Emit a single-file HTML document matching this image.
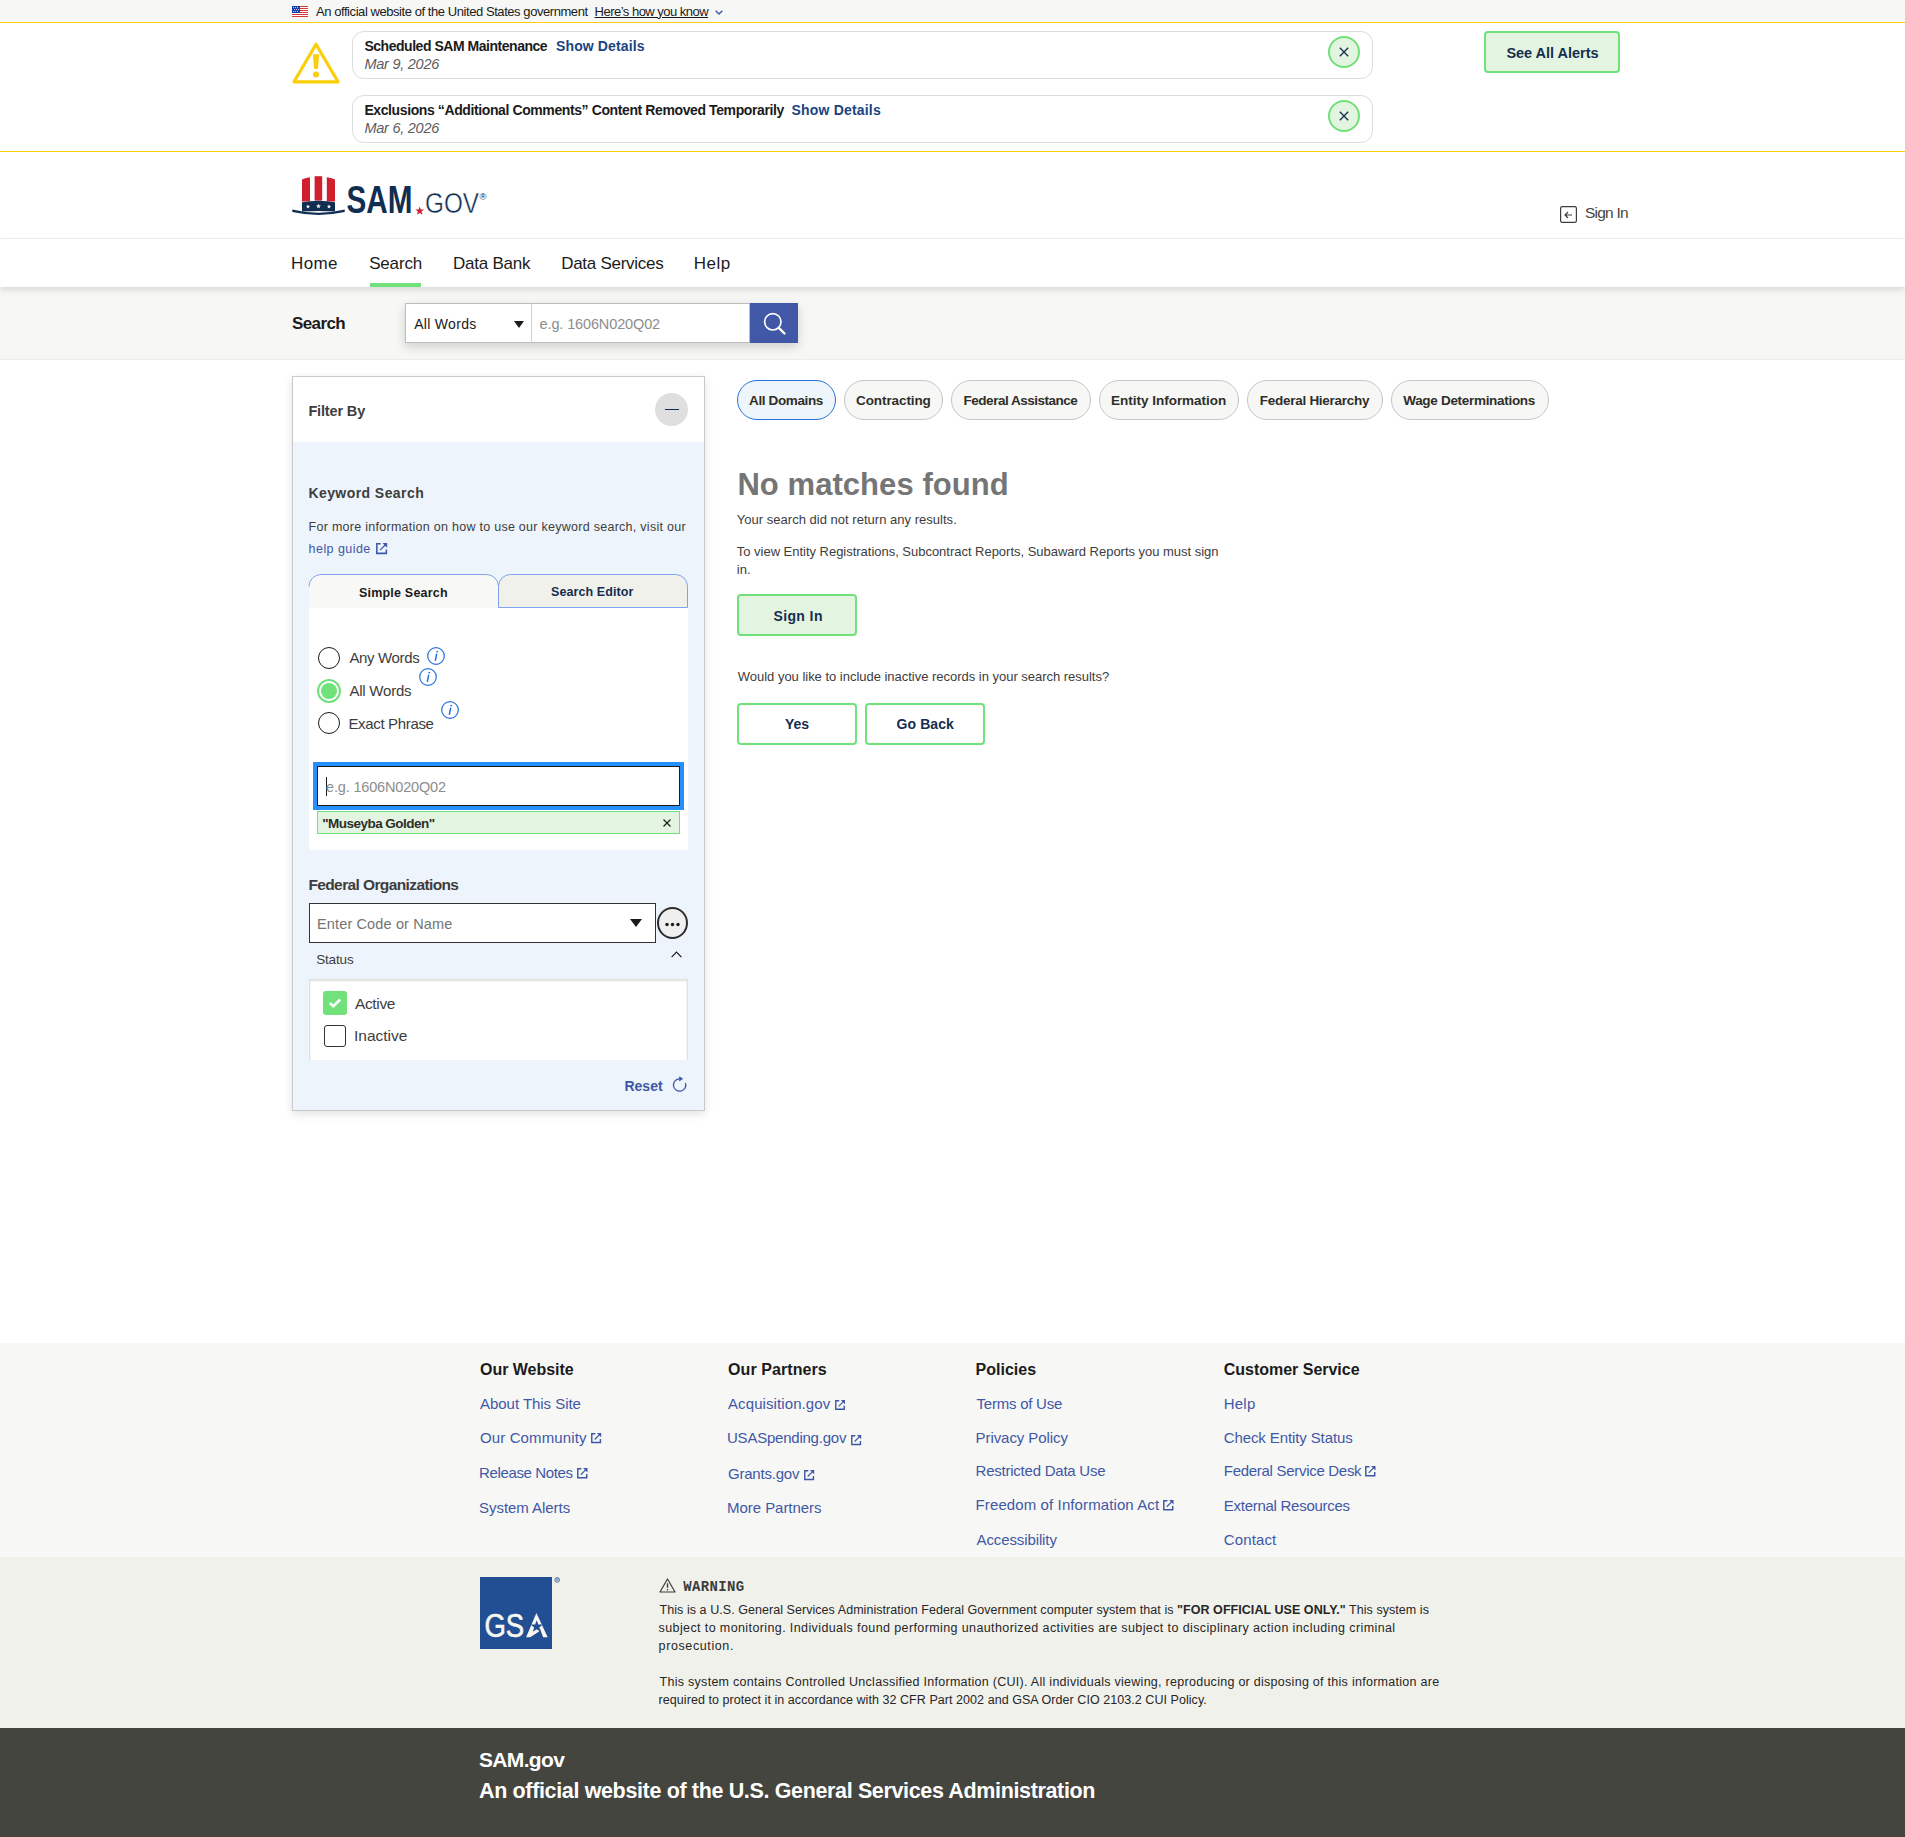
<!DOCTYPE html>
<html lang="en"><head><meta charset="utf-8"><title>SAM.gov Search</title>
<style>
html,body{margin:0;padding:0;}
body{width:1905px;height:1837px;position:relative;overflow:hidden;background:#fff;font-family:"Liberation Sans", sans-serif;}
.t{position:absolute;z-index:5;white-space:nowrap;line-height:normal;}
.b{position:absolute;box-sizing:border-box;}
svg{position:absolute;overflow:visible;}
</style></head>
<body>
<!-- gov banner -->
<div class="b" style="left:0;top:0;width:1905px;height:22px;background:#f7f7f5;"></div>
<div class="b" style="left:0;top:22px;width:1905px;height:1px;background:#fcce0a;"></div>
<svg style="left:292px;top:6px" width="16" height="11" viewBox="0 0 16 11">
 <rect width="16" height="11" fill="#fff"/>
 <g fill="#d83933"><rect y="0" width="16" height="1"/><rect y="2" width="16" height="1"/><rect y="4" width="16" height="1"/><rect y="6" width="16" height="1"/><rect y="8" width="16" height="1"/><rect y="10" width="16" height="1"/></g>
 <rect width="8" height="7" fill="#1a3ead"/>
 <g fill="#fff"><circle cx="1.6" cy="1.4" r=".5"/><circle cx="3.6" cy="1.4" r=".5"/><circle cx="5.6" cy="1.4" r=".5"/><circle cx="2.6" cy="3.4" r=".5"/><circle cx="4.6" cy="3.4" r=".5"/><circle cx="6.4" cy="3.4" r=".5"/><circle cx="1.6" cy="5.4" r=".5"/><circle cx="3.6" cy="5.4" r=".5"/><circle cx="5.6" cy="5.4" r=".5"/></g>
</svg>
<svg style="left:715px;top:10px" width="8" height="5" viewBox="0 0 8 5"><path d="M.7.7 4 4 7.3.7" fill="none" stroke="#3f57a6" stroke-width="1.4"/></svg>
<!-- alerts -->
<div class="b" style="left:0;top:151px;width:1905px;height:1px;background:#fcce0a;"></div>
<svg style="left:292px;top:42px" width="48" height="42" viewBox="0 0 48 42">
 <path d="M24 2.2 L46 39.8 H2 Z" fill="none" stroke="#fcce0a" stroke-width="3.2" stroke-linejoin="round"/>
 <path d="M20.9 12.6 Q24 11.2 27.1 12.6 L26 26.6 Q24 27.6 22 26.6 Z" fill="#fcce0a"/>
 <circle cx="24" cy="32.6" r="3" fill="#fcce0a"/>
</svg>
<div class="b" style="left:352px;top:31px;width:1021px;height:48px;border:1px solid #dcdcdc;border-radius:12px;"></div>
<div class="b" style="left:352px;top:95px;width:1021px;height:48px;border:1px solid #dcdcdc;border-radius:12px;"></div>
<div class="b" style="left:1328px;top:36px;width:32px;height:32px;border:2px solid #70e17b;border-radius:50%;background:#e3f5e1;"></div>
<div class="b" style="left:1328px;top:100px;width:32px;height:32px;border:2px solid #70e17b;border-radius:50%;background:#e3f5e1;"></div>
<svg style="left:1339px;top:47px" width="10" height="10" viewBox="0 0 10 10"><path d="M.8.8 9.2 9.2M9.2.8.8 9.2" stroke="#162e51" stroke-width="1.3"/></svg>
<svg style="left:1339px;top:111px" width="10" height="10" viewBox="0 0 10 10"><path d="M.8.8 9.2 9.2M9.2.8.8 9.2" stroke="#162e51" stroke-width="1.3"/></svg>
<div class="b" style="left:1484px;top:31px;width:136px;height:42px;border:2px solid #70e17b;border-radius:4px;background:#e3f5e1;"></div>
<!-- header -->
<div class="b" style="left:0;top:238px;width:1905px;height:1px;background:#f0f0ec;"></div>
<svg style="left:292px;top:176px" width="196" height="40" viewBox="0 0 196 40">
 <g fill="#d0202e">
  <path d="M10 3.4 Q14 1.8 18 1.3 V25.6 H10 Z"/>
  <path d="M22.6 0.2 H30.2 V24.6 H22.6 Z"/>
  <path d="M34.8 1.3 Q39 1.8 43 3.4 V25.6 H34.8 Z"/>
 </g>
 <path d="M10 26.2 Q26.5 23.2 43 26.2 V35.6 Q26.5 34.6 10 35.6 Z" fill="#112e51"/>
 <path fill="#fff" d="M16.00,28.40 L16.54,29.85 L18.09,29.92 L16.88,30.89 L17.29,32.38 L16.00,31.52 L14.71,32.38 L15.12,30.89 L13.91,29.92 L15.46,29.85Z M26.50,27.70 L27.12,29.35 L28.88,29.43 L27.50,30.52 L27.97,32.22 L26.50,31.25 L25.03,32.22 L25.50,30.52 L24.12,29.43 L25.88,29.35Z M37.00,28.40 L37.54,29.85 L39.09,29.92 L37.88,30.89 L38.29,32.38 L37.00,31.52 L35.71,32.38 L36.12,30.89 L34.91,29.92 L36.46,29.85Z"/>
 <path d="M0.3 33.4 Q26.5 40 52.7 33.4 L52.7 36 Q26.5 41.8 0.3 36 Z" fill="#112e51"/>
 <text x="54.5" y="36.9" font-family="Liberation Sans" font-weight="bold" font-size="38.7" fill="#112e51" textLength="65.9" lengthAdjust="spacingAndGlyphs">SAM</text>
 <text x="133" y="36.9" font-family="Liberation Sans" font-size="29.7" fill="#112e51" stroke="#fff" stroke-width="0.45" textLength="54" lengthAdjust="spacingAndGlyphs">GOV</text>
 <text x="187.5" y="24" font-family="Liberation Sans" font-size="9.5" fill="#112e51">®</text>
 <path fill="#d0202e" d="M127.70,30.40 L128.82,33.46 L132.07,33.58 L129.51,35.59 L130.40,38.72 L127.70,36.90 L125.00,38.72 L125.89,35.59 L123.33,33.58 L126.58,33.46Z"/>
</svg>
<svg style="left:1560px;top:206px" width="17" height="17" viewBox="0 0 17 17"><rect x=".6" y=".6" width="15.8" height="15.8" rx="1.6" fill="none" stroke="#3d3d3d" stroke-width="1.2"/><path d="M12 9H5M8 6 5 9 8 12" fill="none" stroke="#3d3d3d" stroke-width="1.2"/></svg>
<!-- nav -->
<div class="b" style="left:0;top:239px;width:1905px;height:48px;background:#fff;box-shadow:0 3px 6px rgba(0,0,0,.12);z-index:2;"></div>
<div class="b" style="left:370px;top:283px;width:51px;height:4px;background:#70e17b;z-index:3;"></div>
<!-- search bar -->
<div class="b" style="left:0;top:287px;width:1905px;height:73px;background:#f7f7f5;border-bottom:1px solid #ededeb;z-index:1;"></div>
<div class="b" style="left:405px;top:303px;width:393px;height:40px;box-shadow:0 4px 10px rgba(0,0,0,.16);z-index:1;"></div>
<div class="b" style="left:405px;top:303px;width:127px;height:40px;background:#fff;border:1px solid #bdbdbd;z-index:1;"></div>
<div class="b" style="left:531px;top:303px;width:219px;height:40px;background:#fff;border:1px solid #bdbdbd;border-left:1px solid #d0d0d0;z-index:1;"></div>
<div class="b" style="left:750px;top:303px;width:48px;height:40px;background:#4058a6;z-index:1;"></div>
<svg style="left:514px;top:321px;z-index:2" width="10" height="7" viewBox="0 0 10 7"><path d="M0 0H10L5 7Z" fill="#1b1b1b"/></svg>
<svg style="left:763px;top:312px;z-index:2" width="23" height="23" viewBox="0 0 23 23"><circle cx="9.8" cy="9.8" r="8.2" fill="none" stroke="#fff" stroke-width="1.7"/><path d="M15.8 15.8 21.5 21.5" stroke="#fff" stroke-width="2.4" stroke-linecap="round"/></svg>
<!-- sidebar -->
<div class="b" style="left:292px;top:376px;width:413px;height:735px;background:#eef4fb;border:1px solid #c9c9c9;box-shadow:0 3px 9px rgba(0,0,0,.12);"></div>
<div class="b" style="left:293px;top:377px;width:411px;height:65px;background:#fff;"></div>
<div class="b" style="left:655px;top:393px;width:33px;height:33px;border-radius:50%;background:#dfdfdf;"></div>
<div class="b" style="left:664.5px;top:408.5px;width:14.5px;height:1.5px;background:#162e51;"></div>
<!-- tabs -->
<svg style="left:308px;top:573px" width="382" height="36" viewBox="0 0 382 36">
 <path d="M1 13.5 A12 12 0 0 1 13 1.5 H178.5 A12 12 0 0 1 190.5 13.5 V35 H1 Z" fill="#f8f8f6"/>
 <path d="M190.5 34.5 V13.5 A12 12 0 0 1 202.5 1.5 H367.5 A12 12 0 0 1 379.5 13.5 V34.5 Z" fill="#f1f1ec"/>
 <path d="M1 13.5 A12 12 0 0 1 13 1.5 H178.5 A12 12 0 0 1 190.5 13.5" fill="none" stroke="#7fa3ec" stroke-width="1"/>
 <path d="M190.5 34.5 V13.5 A12 12 0 0 1 202.5 1.5 H367.5 A12 12 0 0 1 379.5 13.5 V34.5 Z" fill="none" stroke="#7fa3ec" stroke-width="1"/>
</svg>
<div class="b" style="left:309px;top:608px;width:379px;height:242px;background:#fff;"></div>
<div class="b" style="left:318px;top:647px;width:22px;height:22px;border:1.3px solid #1b1b1b;border-radius:50%;"></div>
<div class="b" style="left:317px;top:679px;width:24px;height:24px;border:2px solid #70e17b;border-radius:50%;background:#fff;"></div>
<div class="b" style="left:321px;top:683px;width:16px;height:16px;border-radius:50%;background:#70e17b;"></div>
<div class="b" style="left:318px;top:712px;width:22px;height:22px;border:1.3px solid #1b1b1b;border-radius:50%;"></div>
<svg style="left:427px;top:647px" width="18" height="18" viewBox="0 0 18 18"><circle cx="9" cy="9" r="8.3" fill="none" stroke="#2672de" stroke-width="1.2"/><path d="M9.6 7.3 8.4 13.3" stroke="#2672de" stroke-width="1.5" stroke-linecap="round"/><circle cx="10.2" cy="4.6" r=".95" fill="#2672de"/></svg>
<svg style="left:419px;top:668px" width="18" height="18" viewBox="0 0 18 18"><circle cx="9" cy="9" r="8.3" fill="none" stroke="#2672de" stroke-width="1.2"/><path d="M9.6 7.3 8.4 13.3" stroke="#2672de" stroke-width="1.5" stroke-linecap="round"/><circle cx="10.2" cy="4.6" r=".95" fill="#2672de"/></svg>
<svg style="left:441px;top:701px" width="18" height="18" viewBox="0 0 18 18"><circle cx="9" cy="9" r="8.3" fill="none" stroke="#2672de" stroke-width="1.2"/><path d="M9.6 7.3 8.4 13.3" stroke="#2672de" stroke-width="1.5" stroke-linecap="round"/><circle cx="10.2" cy="4.6" r=".95" fill="#2672de"/></svg>
<!-- focused input -->
<div class="b" style="left:313px;top:762px;width:371px;height:48px;background:#2491ff;"></div>
<div class="b" style="left:317px;top:766px;width:363px;height:40px;background:#fff;border:1px solid #1b1b1b;"></div>
<div class="b" style="left:326px;top:777px;width:1px;height:19px;background:#1b1b1b;"></div>
<div class="b" style="left:317px;top:811px;width:363px;height:23px;background:#e3f5e1;border:1px solid #70e17b;"></div>
<svg style="left:663px;top:819px" width="8" height="8" viewBox="0 0 8 8"><path d="M.5.5 7.5 7.5M7.5.5.5 7.5" stroke="#1b1b1b" stroke-width="1.2"/></svg>
<!-- fed org -->
<div class="b" style="left:309px;top:903px;width:347px;height:40px;background:#fff;border:1px solid #333;"></div>
<svg style="left:630px;top:919px" width="12" height="8" viewBox="0 0 12 8"><path d="M0 0H12L6 8Z" fill="#1b1b1b"/></svg>
<div class="b" style="left:657px;top:907px;width:31px;height:32px;border:2px solid #2e2e2e;border-radius:50%;background:#efefef;"></div>
<svg style="left:664px;top:921.5px" width="17" height="5" viewBox="0 0 17 5"><circle cx="3" cy="2.5" r="1.7" fill="#1b1b1b"/><circle cx="8.5" cy="2.5" r="1.7" fill="#1b1b1b"/><circle cx="14" cy="2.5" r="1.7" fill="#1b1b1b"/></svg>
<svg style="left:671px;top:951px" width="11" height="7" viewBox="0 0 11 7"><path d="M.6 6.2 5.5 1.1 10.4 6.2" fill="none" stroke="#1b1b1b" stroke-width="1.2"/></svg>
<div class="b" style="left:309px;top:979px;width:379px;height:81px;background:#fff;border:1px solid #e0e0dc;border-bottom:none;box-shadow:inset 0 1px 2px rgba(0,0,0,.12);"></div>
<div class="b" style="left:323px;top:991px;width:24px;height:24px;background:#70e17b;border-radius:3px;"></div>
<svg style="left:328px;top:997px" width="14" height="12" viewBox="0 0 14 12"><path d="M1.8 6 5.3 9.3 12.2 2.5" fill="none" stroke="#fff" stroke-width="2.6"/></svg>
<div class="b" style="left:324px;top:1025px;width:22px;height:22px;border:1.3px solid #333;border-radius:3px;background:#fff;"></div>
<svg style="left:672px;top:1076px" width="16" height="16" viewBox="0 0 16 16"><path d="M7.6 2.8 A6.2 6.2 0 1 0 13.43 6.88" fill="none" stroke="#3f57a6" stroke-width="1.3"/><path d="M7.2 0.2 L11.2 2.8 L7.2 5.4 Z" fill="#3f57a6"/></svg>
<!-- chips -->
<div class="b" style="left:737px;top:380px;width:99px;height:40px;border:1px solid #2672de;border-radius:20px;background:#eff6fb;"></div>
<div class="b" style="left:844px;top:380px;width:99px;height:40px;border:1px solid #c6c6c6;border-radius:20px;background:#f7f7f5;"></div>
<div class="b" style="left:951px;top:380px;width:140px;height:40px;border:1px solid #c6c6c6;border-radius:20px;background:#f7f7f5;"></div>
<div class="b" style="left:1099px;top:380px;width:140px;height:40px;border:1px solid #c6c6c6;border-radius:20px;background:#f7f7f5;"></div>
<div class="b" style="left:1247px;top:380px;width:136px;height:40px;border:1px solid #c6c6c6;border-radius:20px;background:#f7f7f5;"></div>
<div class="b" style="left:1391px;top:380px;width:158px;height:40px;border:1px solid #c6c6c6;border-radius:20px;background:#f7f7f5;"></div>
<!-- buttons -->
<div class="b" style="left:737px;top:594px;width:120px;height:42px;border:2px solid #70e17b;border-radius:4px;background:#e3f5e1;"></div>
<div class="b" style="left:737px;top:703px;width:120px;height:42px;border:2px solid #70e17b;border-radius:4px;background:#fff;"></div>
<div class="b" style="left:865px;top:703px;width:120px;height:42px;border:2px solid #70e17b;border-radius:4px;background:#fff;"></div>
<!-- footer -->
<div class="b" style="left:0;top:1343px;width:1905px;height:214px;background:#f7f7f5;"></div>
<div class="b" style="left:0;top:1557px;width:1905px;height:171px;background:#f1f1ec;"></div>
<div class="b" style="left:0;top:1728px;width:1905px;height:109px;background:#454540;"></div>
<svg style="left:480px;top:1577px" width="82" height="72" viewBox="0 0 82 72">
 <rect width="72" height="72" fill="#224f93"/>
 <text x="4.4" y="60.2" font-family="Liberation Sans" font-size="33.5" fill="#f7f7f2" stroke="#f7f7f2" stroke-width="0.6" textLength="39.8" lengthAdjust="spacingAndGlyphs">GS</text>
 <path d="M46.1 60.2 L56.4 35.9 L67.7 60.2 Z" fill="#f7f7f2"/>
 <path fill="#224f93" d="M56.70,43.20 L58.29,47.42 L62.79,47.62 L59.27,50.43 L60.46,54.78 L56.70,52.30 L52.94,54.78 L54.13,50.43 L50.61,47.62 L55.11,47.42Z"/>
 <path fill="#224f93" d="M49.1 61 L59.1 54.6 L59.8 51.2 L63.4 61 Z"/>
 <circle cx="77.2" cy="2.9" r="2.4" fill="none" stroke="#224f93" stroke-width=".7"/>
 <path d="M76.3 4.5V1.5H77.6Q78.4 1.5 78.4 2.3Q78.4 3 77.6 3H76.3M77.5 3 78.4 4.5" fill="none" stroke="#224f93" stroke-width=".5"/>
</svg>
<svg style="left:659px;top:1578px" width="17" height="15" viewBox="0 0 17 15"><path d="M8.5 1 16 14H1Z" fill="none" stroke="#3d3d3d" stroke-width="1.2" stroke-linejoin="round"/><path d="M8.5 5.3V9.8" stroke="#3d3d3d" stroke-width="1.4"/><circle cx="8.5" cy="11.7" r=".8" fill="#3d3d3d"/></svg>

<!-- ext icons -->
<svg style="left:375.5px;top:543px" width="11.2" height="11.2" viewBox="0 0 10 10"><path d="M4.2 .75H.75V9.25H9.25V5.8" fill="none" stroke="#3f57a6" stroke-width="1.4"/><path d="M3.6 6.4 8.4 1.6" stroke="#3f57a6" stroke-width="1.15"/><path d="M5.8 0H10V4.2Z" fill="#3f57a6"/></svg>
<svg style="left:590.5px;top:1433px" width="10.2" height="10.2" viewBox="0 0 10 10"><path d="M4.2 .75H.75V9.25H9.25V5.8" fill="none" stroke="#3f57a6" stroke-width="1.4"/><path d="M3.6 6.4 8.4 1.6" stroke="#3f57a6" stroke-width="1.15"/><path d="M5.8 0H10V4.2Z" fill="#3f57a6"/></svg>
<svg style="left:577px;top:1467.8px" width="10.5" height="10.5" viewBox="0 0 10 10"><path d="M4.2 .75H.75V9.25H9.25V5.8" fill="none" stroke="#3f57a6" stroke-width="1.4"/><path d="M3.6 6.4 8.4 1.6" stroke="#3f57a6" stroke-width="1.15"/><path d="M5.8 0H10V4.2Z" fill="#3f57a6"/></svg>
<svg style="left:834.5px;top:1399.8px" width="10" height="10" viewBox="0 0 10 10"><path d="M4.2 .75H.75V9.25H9.25V5.8" fill="none" stroke="#3f57a6" stroke-width="1.4"/><path d="M3.6 6.4 8.4 1.6" stroke="#3f57a6" stroke-width="1.15"/><path d="M5.8 0H10V4.2Z" fill="#3f57a6"/></svg>
<svg style="left:850.9px;top:1434.8px" width="10.2" height="10.2" viewBox="0 0 10 10"><path d="M4.2 .75H.75V9.25H9.25V5.8" fill="none" stroke="#3f57a6" stroke-width="1.4"/><path d="M3.6 6.4 8.4 1.6" stroke="#3f57a6" stroke-width="1.15"/><path d="M5.8 0H10V4.2Z" fill="#3f57a6"/></svg>
<svg style="left:803.5px;top:1469.8px" width="10.2" height="10.2" viewBox="0 0 10 10"><path d="M4.2 .75H.75V9.25H9.25V5.8" fill="none" stroke="#3f57a6" stroke-width="1.4"/><path d="M3.6 6.4 8.4 1.6" stroke="#3f57a6" stroke-width="1.15"/><path d="M5.8 0H10V4.2Z" fill="#3f57a6"/></svg>
<svg style="left:1163px;top:1500.3px" width="10.5" height="10.5" viewBox="0 0 10 10"><path d="M4.2 .75H.75V9.25H9.25V5.8" fill="none" stroke="#3f57a6" stroke-width="1.4"/><path d="M3.6 6.4 8.4 1.6" stroke="#3f57a6" stroke-width="1.15"/><path d="M5.8 0H10V4.2Z" fill="#3f57a6"/></svg>
<svg style="left:1364.8px;top:1466.3px" width="10.5" height="10.5" viewBox="0 0 10 10"><path d="M4.2 .75H.75V9.25H9.25V5.8" fill="none" stroke="#3f57a6" stroke-width="1.4"/><path d="M3.6 6.4 8.4 1.6" stroke="#3f57a6" stroke-width="1.15"/><path d="M5.8 0H10V4.2Z" fill="#3f57a6"/></svg>

<div class="t" id="t0" style="left:316.0px;top:3.7px;font-size:13.0px;font-weight:400;color:#1b1b1b;letter-spacing:-0.436px;">An official website of the United States government</div>
<div class="t" id="t1" style="left:594.6px;top:3.7px;font-size:13.0px;font-weight:400;color:#1b1b1b;letter-spacing:-0.515px;text-decoration:underline;text-underline-offset:1px;">Here’s how you know</div>
<div class="t" id="t2" style="left:364.4px;top:37.8px;font-size:14.0px;font-weight:700;color:#1b1b1b;letter-spacing:-0.468px;">Scheduled SAM Maintenance</div>
<div class="t" id="t3" style="left:556.0px;top:37.8px;font-size:14.0px;font-weight:700;color:#1a4480;letter-spacing:0.130px;">Show Details</div>
<div class="t" id="t4" style="left:364.4px;top:55.8px;font-size:14.5px;font-weight:400;color:#5c5c5c;font-style:italic;letter-spacing:-0.250px;">Mar 9, 2026</div>
<div class="t" id="t5" style="left:364.4px;top:101.8px;font-size:14.0px;font-weight:700;color:#1b1b1b;letter-spacing:-0.395px;">Exclusions “Additional Comments” Content Removed Temporarily</div>
<div class="t" id="t6" style="left:791.6px;top:101.8px;font-size:14.0px;font-weight:700;color:#1a4480;letter-spacing:0.182px;">Show Details</div>
<div class="t" id="t7" style="left:364.4px;top:119.8px;font-size:14.5px;font-weight:400;color:#5c5c5c;font-style:italic;letter-spacing:-0.250px;">Mar 6, 2026</div>
<div class="t" id="t8" style="left:1506.4px;top:45.0px;font-size:14.5px;font-weight:700;color:#162e51;letter-spacing:-0.019px;">See All Alerts</div>
<div class="t" id="t9" style="left:1585.0px;top:203.8px;font-size:15.5px;font-weight:400;color:#454540;letter-spacing:-0.768px;">Sign In</div>
<div class="t" id="t10" style="left:291.0px;top:253.8px;font-size:17.0px;font-weight:400;color:#1b1b1b;letter-spacing:0.399px;">Home</div>
<div class="t" id="t11" style="left:369.2px;top:253.8px;font-size:17.0px;font-weight:400;color:#1b1b1b;letter-spacing:-0.180px;">Search</div>
<div class="t" id="t12" style="left:453.0px;top:253.8px;font-size:17.0px;font-weight:400;color:#1b1b1b;letter-spacing:-0.250px;">Data Bank</div>
<div class="t" id="t13" style="left:561.2px;top:253.8px;font-size:17.0px;font-weight:400;color:#1b1b1b;letter-spacing:-0.275px;">Data Services</div>
<div class="t" id="t14" style="left:693.8px;top:253.8px;font-size:17.0px;font-weight:400;color:#1b1b1b;letter-spacing:0.500px;">Help</div>
<div class="t" id="t15" style="left:292.0px;top:313.9px;font-size:17.0px;font-weight:700;color:#1b1b1b;letter-spacing:-0.620px;">Search</div>
<div class="t" id="t16" style="left:414.2px;top:315.9px;font-size:14.0px;font-weight:400;color:#1b1b1b;letter-spacing:0.300px;">All Words</div>
<div class="t" id="t17" style="left:539.6px;top:315.8px;font-size:14.5px;font-weight:400;color:#8d8d8d;letter-spacing:-0.133px;">e.g. 1606N020Q02</div>
<div class="t" id="t18" style="left:308.4px;top:403.2px;font-size:14.5px;font-weight:700;color:#3d3d3d;letter-spacing:-0.150px;">Filter By</div>
<div class="t" id="t19" style="left:308.4px;top:484.7px;font-size:14.0px;font-weight:700;color:#3d3d3d;letter-spacing:0.432px;">Keyword Search</div>
<div class="t" id="t20" style="left:308.6px;top:519.8px;font-size:12.5px;font-weight:400;color:#3d3d3d;letter-spacing:0.271px;">For more information on how to use our keyword search, visit our</div>
<div class="t" id="t21" style="left:308.6px;top:541.8px;font-size:12.5px;font-weight:400;color:#3f57a6;letter-spacing:0.444px;">help guide</div>
<div class="t" id="t22" style="left:359.0px;top:585.7px;font-size:12.5px;font-weight:700;color:#1b1b1b;letter-spacing:0.201px;">Simple Search</div>
<div class="t" id="t23" style="left:551.0px;top:584.9px;font-size:12.5px;font-weight:700;color:#162e51;letter-spacing:0.098px;">Search Editor</div>
<div class="t" id="t24" style="left:349.4px;top:648.8px;font-size:15.0px;font-weight:400;color:#3d3d3d;letter-spacing:-0.342px;">Any Words</div>
<div class="t" id="t25" style="left:349.4px;top:681.8px;font-size:15.0px;font-weight:400;color:#3d3d3d;letter-spacing:-0.217px;">All Words</div>
<div class="t" id="t26" style="left:348.4px;top:714.9px;font-size:15.0px;font-weight:400;color:#3d3d3d;letter-spacing:-0.334px;">Exact Phrase</div>
<div class="t" id="t27" style="left:326.0px;top:778.7px;font-size:14.5px;font-weight:400;color:#8d8d8d;letter-spacing:-0.166px;">e.g. 1606N020Q02</div>
<div class="t" id="t28" style="left:322.2px;top:815.5px;font-size:13.5px;font-weight:700;color:#2e2e2a;letter-spacing:-0.527px;">"Museyba Golden"</div>
<div class="t" id="t29" style="left:308.4px;top:876.4px;font-size:15.5px;font-weight:700;color:#3d3d3d;letter-spacing:-0.610px;">Federal Organizations</div>
<div class="t" id="t30" style="left:317.0px;top:916.2px;font-size:14.5px;font-weight:400;color:#747474;letter-spacing:0.138px;">Enter Code or Name</div>
<div class="t" id="t31" style="left:316.2px;top:951.9px;font-size:13.5px;font-weight:400;color:#3d3d3d;letter-spacing:-0.160px;">Status</div>
<div class="t" id="t32" style="left:355.0px;top:994.9px;font-size:15.5px;font-weight:400;color:#3d3d3d;letter-spacing:-0.360px;">Active</div>
<div class="t" id="t33" style="left:354.0px;top:1027.2px;font-size:15.5px;font-weight:400;color:#3d3d3d;">Inactive</div>
<div class="t" id="t34" style="left:624.4px;top:1077.9px;font-size:14.0px;font-weight:700;color:#3f57a6;letter-spacing:0.025px;">Reset</div>
<div class="t" id="t35" style="left:749.0px;top:393.3px;font-size:13.5px;font-weight:700;color:#2e2e2a;letter-spacing:-0.370px;">All Domains</div>
<div class="t" id="t36" style="left:856.0px;top:393.3px;font-size:13.5px;font-weight:700;color:#2e2e2a;letter-spacing:-0.090px;">Contracting</div>
<div class="t" id="t37" style="left:963.6px;top:393.3px;font-size:13.5px;font-weight:700;color:#2e2e2a;letter-spacing:-0.491px;">Federal Assistance</div>
<div class="t" id="t38" style="left:1111.0px;top:393.3px;font-size:13.5px;font-weight:700;color:#2e2e2a;letter-spacing:-0.010px;">Entity Information</div>
<div class="t" id="t39" style="left:1259.8px;top:393.3px;font-size:13.5px;font-weight:700;color:#2e2e2a;letter-spacing:-0.273px;">Federal Hierarchy</div>
<div class="t" id="t40" style="left:1403.2px;top:393.3px;font-size:13.5px;font-weight:700;color:#2e2e2a;letter-spacing:-0.299px;">Wage Determinations</div>
<div class="t" id="t41" style="left:737.4px;top:467.0px;font-size:31px;font-weight:700;color:#757575;letter-spacing:0.060px;">No matches found</div>
<div class="t" id="t42" style="left:736.8px;top:512.3px;font-size:13.0px;font-weight:400;color:#3d3d3d;letter-spacing:0.020px;">Your search did not return any results.</div>
<div class="t" id="t43" style="left:736.8px;top:544.0px;font-size:13.0px;font-weight:400;color:#3d3d3d;letter-spacing:-0.021px;">To view Entity Registrations, Subcontract Reports, Subaward Reports you must sign</div>
<div class="t" id="t44" style="left:736.8px;top:561.7px;font-size:13.0px;font-weight:400;color:#3d3d3d;">in.</div>
<div class="t" id="t45" style="left:773.4px;top:608.3px;font-size:14.0px;font-weight:700;color:#162e51;letter-spacing:0.399px;">Sign In</div>
<div class="t" id="t46" style="left:737.8px;top:669.3px;font-size:13.0px;font-weight:400;color:#3d3d3d;letter-spacing:-0.019px;">Would you like to include inactive records in your search results?</div>
<div class="t" id="t47" style="left:785.0px;top:716.3px;font-size:14.0px;font-weight:700;color:#162e51;letter-spacing:-0.100px;">Yes</div>
<div class="t" id="t48" style="left:896.6px;top:716.3px;font-size:14.0px;font-weight:700;color:#162e51;letter-spacing:0.083px;">Go Back</div>
<div class="t" id="t49" style="left:480.0px;top:1361.0px;font-size:16.0px;font-weight:700;color:#1b1b1b;letter-spacing:-0.020px;">Our Website</div>
<div class="t" id="t50" style="left:728.0px;top:1361.0px;font-size:16.0px;font-weight:700;color:#1b1b1b;letter-spacing:0.081px;">Our Partners</div>
<div class="t" id="t51" style="left:975.6px;top:1361.0px;font-size:16.0px;font-weight:700;color:#1b1b1b;">Policies</div>
<div class="t" id="t52" style="left:1223.8px;top:1361.0px;font-size:16.0px;font-weight:700;color:#1b1b1b;letter-spacing:-0.021px;">Customer Service</div>
<div class="t" id="t53" style="left:480.0px;top:1394.8px;font-size:15.0px;font-weight:400;color:#3f57a6;letter-spacing:-0.036px;">About This Site</div>
<div class="t" id="t54" style="left:480.0px;top:1428.5px;font-size:15.0px;font-weight:400;color:#3f57a6;letter-spacing:0.118px;">Our Community</div>
<div class="t" id="t55" style="left:479.0px;top:1463.6px;font-size:15.0px;font-weight:400;color:#3f57a6;letter-spacing:-0.358px;">Release Notes</div>
<div class="t" id="t56" style="left:479.0px;top:1498.7px;font-size:15.0px;font-weight:400;color:#3f57a6;letter-spacing:-0.041px;">System Alerts</div>
<div class="t" id="t57" style="left:728.0px;top:1394.8px;font-size:15.0px;font-weight:400;color:#3f57a6;letter-spacing:0.094px;">Acquisition.gov</div>
<div class="t" id="t58" style="left:727.0px;top:1429.3px;font-size:15.0px;font-weight:400;color:#3f57a6;letter-spacing:-0.228px;">USASpending.gov</div>
<div class="t" id="t59" style="left:728.0px;top:1464.6px;font-size:15.0px;font-weight:400;color:#3f57a6;letter-spacing:-0.210px;">Grants.gov</div>
<div class="t" id="t60" style="left:727.0px;top:1499.4px;font-size:15.0px;font-weight:400;color:#3f57a6;letter-spacing:-0.041px;">More Partners</div>
<div class="t" id="t61" style="left:976.6px;top:1395.0px;font-size:15.0px;font-weight:400;color:#3f57a6;letter-spacing:-0.243px;">Terms of Use</div>
<div class="t" id="t62" style="left:975.6px;top:1428.6px;font-size:15.0px;font-weight:400;color:#3f57a6;letter-spacing:-0.077px;">Privacy Policy</div>
<div class="t" id="t63" style="left:975.6px;top:1461.7px;font-size:15.0px;font-weight:400;color:#3f57a6;letter-spacing:-0.237px;">Restricted Data Use</div>
<div class="t" id="t64" style="left:975.6px;top:1495.8px;font-size:15.0px;font-weight:400;color:#3f57a6;letter-spacing:0.104px;">Freedom of Information Act</div>
<div class="t" id="t65" style="left:976.6px;top:1530.6px;font-size:15.0px;font-weight:400;color:#3f57a6;letter-spacing:-0.117px;">Accessibility</div>
<div class="t" id="t66" style="left:1223.8px;top:1395.0px;font-size:15.0px;font-weight:400;color:#3f57a6;letter-spacing:0.198px;">Help</div>
<div class="t" id="t67" style="left:1223.8px;top:1428.6px;font-size:15.0px;font-weight:400;color:#3f57a6;letter-spacing:-0.111px;">Check Entity Status</div>
<div class="t" id="t68" style="left:1223.8px;top:1461.7px;font-size:15.0px;font-weight:400;color:#3f57a6;letter-spacing:-0.293px;">Federal Service Desk</div>
<div class="t" id="t69" style="left:1223.8px;top:1496.7px;font-size:15.0px;font-weight:400;color:#3f57a6;letter-spacing:-0.274px;">External Resources</div>
<div class="t" id="t70" style="left:1223.8px;top:1530.6px;font-size:15.0px;font-weight:400;color:#3f57a6;letter-spacing:0.132px;">Contact</div>
<div class="t" id="t71" style="left:683.2px;top:1579.2px;font-size:14px;font-weight:700;color:#3d3d3d;font-family:'Liberation Mono', monospace;letter-spacing:0.349px;">WARNING</div>
<div class="t" id="t72" style="left:659.6px;top:1602.7px;font-size:12.5px;font-weight:400;color:#262626;letter-spacing:0.053px;">This is a U.S. General Services Administration Federal Government computer system that is <b>"FOR OFFICIAL USE ONLY."</b> This system is</div>
<div class="t" id="t73" style="left:658.6px;top:1620.9px;font-size:12.5px;font-weight:400;color:#262626;letter-spacing:0.391px;">subject to monitoring. Individuals found performing unauthorized activities are subject to disciplinary action including criminal</div>
<div class="t" id="t74" style="left:658.6px;top:1638.7px;font-size:12.5px;font-weight:400;color:#262626;letter-spacing:0.607px;">prosecution.</div>
<div class="t" id="t75" style="left:659.6px;top:1674.6px;font-size:12.5px;font-weight:400;color:#262626;letter-spacing:0.276px;">This system contains Controlled Unclassified Information (CUI). All individuals viewing, reproducing or disposing of this information are</div>
<div class="t" id="t76" style="left:658.6px;top:1692.8px;font-size:12.5px;font-weight:400;color:#262626;letter-spacing:0.054px;">required to protect it in accordance with 32 CFR Part 2002 and GSA Order CIO 2103.2 CUI Policy.</div>
<div class="t" id="t77" style="left:479.0px;top:1748.0px;font-size:21px;font-weight:700;color:#ffffff;letter-spacing:-0.666px;">SAM.gov</div>
<div class="t" id="t78" style="left:479.0px;top:1778.9px;font-size:21.5px;font-weight:700;color:#ffffff;letter-spacing:-0.354px;">An official website of the U.S. General Services Administration</div>
</body></html>
